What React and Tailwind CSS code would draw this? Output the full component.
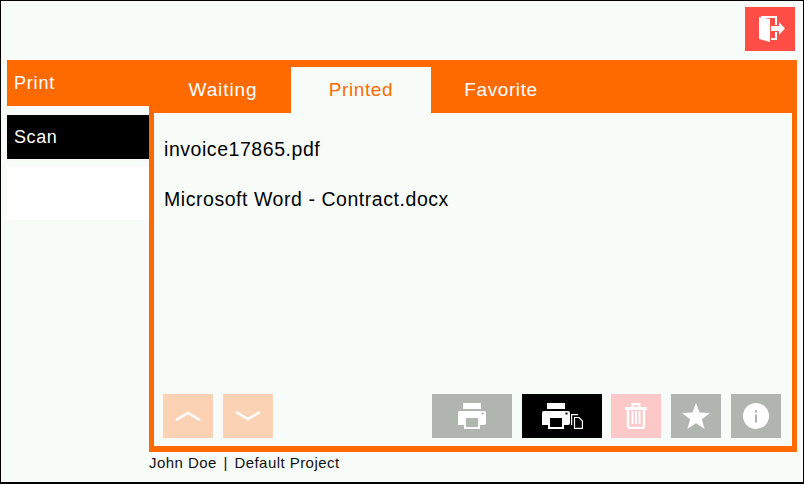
import React from 'react';

const PrinterIcon = ({ bg }) => (
    <svg width="30" height="28" viewBox="0 0 30 28">
        <rect x="6" y="1" width="18" height="6" fill="#fff" />
        <path d="M3 9h24a2 2 0 0 1 2 2v10a2 2 0 0 1-2 2H1V11a2 2 0 0 1 2-2z" fill="#fff" />
        <rect x="8" y="15" width="14" height="11" fill={bg} stroke="#fff" strokeWidth="2" />
        <rect x="24.500" y="10.500" width="2" height="2" fill={bg} />
    </svg>
);

const CopiesIcon = () => (
    <svg width="12" height="15" viewBox="0 0 12 15" fill="none" stroke="#fff" strokeWidth="1.200">
        <path d="M7 .6H.6V11" />
        <path d="M3.500 3.500h4.500l3.400 3.500v7.400H3.500z" />
    </svg>
);

const ExitIcon = () => (
    <svg width="26" height="26" viewBox="0 0 26 26" fill="#fff">
        <path d="M0 1l11 2v23L0 23z" />
        <path d="M2 0h16v9h-2V2H2zM16 16h2v8h-6v-2h4z" />
        <path d="M12 10h8V6l6 6.500-6 6.500v-4h-8z" />
    </svg>
);

const TrashIcon = () => (
    <svg width="22" height="26" viewBox="0 0 22 26" fill="none" stroke="#fff">
        <path d="M0 5.500h22" strokeWidth="3" />
        <path d="M7.500 4V1.200h7V4" strokeWidth="2.200" />
        <path d="M3 7v16a2 2 0 0 0 2 2h12a2 2 0 0 0 2-2V7" strokeWidth="2.400" />
        <path d="M7.500 8v13M11 8v13M14.500 8v13" strokeWidth="2" />
    </svg>
);

const StarIcon = () => (
    <svg width="28" height="26" viewBox="0 0 28 26" fill="#fff">
        <path d="M14 0l3.600 9.600L28 10l-8.200 6.300L22.700 26 14 20.300 5.300 26l2.900-9.700L0 10l10.400-.4z" />
    </svg>
);

const InfoIcon = () => (
    <svg width="26" height="26" viewBox="0 0 26 26">
        <circle cx="13" cy="13" r="13" fill="#fff" />
        <rect x="12" y="7" width="2" height="2.500" fill="#b0b5b0" />
        <rect x="12" y="11.500" width="2" height="8" fill="#b0b5b0" />
    </svg>
);

const Chevron = ({ d }) => (
    <svg width="26" height="10" viewBox="0 0 26 10" fill="none" stroke="#fff" strokeWidth="2.500">
        <path d={d} />
    </svg>
);

const ToolButton = ({ className, children }) => (
    <button className={`flex h-11 items-center justify-center ${className}`}>{children}</button>
);

const App = () => {
    return (
        <div className="flex h-[484px] w-[804px] flex-col border-t border-r border-b-2 border-l border-black bg-[#f8fcf9] font-['Liberation_Sans',sans-serif]">
            {/* Top bar */}
            <div className="flex h-[59px] justify-end pt-1.5 pr-2">
                <button className="flex h-11 w-[50px] items-center justify-center bg-[#ff4e45] pl-1">
                    <ExitIcon />
                </button>
            </div>

            <div className="flex pl-1.5">
                {/* Sidebar */}
                <div className="w-[142px]">
                    <div className="flex h-[46px] items-center bg-[#ff6a00] pl-[7px] text-[18px] tracking-[0.8px] text-white">Print</div>
                    <div className="mt-[9px] flex h-11 items-center bg-black pl-[7px] text-[18px] tracking-[0.6px] text-white">Scan</div>
                    <div className="mt-[7px] h-[54px] bg-white"></div>
                </div>

                {/* Main panel */}
                <div className="flex w-[648px] flex-col">
                    <div className="flex h-[53px] items-end bg-[#ff6a00] pl-1.5 text-[19px] tracking-[0.6px] text-white">
                        <div className="flex h-[46px] w-[136px] items-center justify-center tracking-[0.9px]">Waiting</div>
                        <div className="flex h-[46px] w-[140px] items-center justify-center bg-[#f8fcf9] text-[#ff6a00]">Printed</div>
                        <div className="flex h-[46px] w-[140px] items-center justify-center">Favorite</div>
                    </div>
                    <div className="flex h-[339px] flex-col justify-between border-x-[5px] border-b-[6px] border-[#ff6a00] pr-[11px] pb-2 pl-[9px]">
                        <div className="pt-6 pl-px text-[19.500px] leading-[24px] tracking-[0.55px] text-black">
                            <div>invoice17865.pdf</div>
                            <div className="mt-[26px]">Microsoft Word - Contract.docx</div>
                        </div>
                        <div className="flex items-center">
                            <ToolButton className="w-[50px] bg-[#fbd2b4]"><Chevron d="M1 9l12-7 12 7" /></ToolButton>
                            <ToolButton className="ml-2.5 w-[50px] bg-[#fbd2b4]"><Chevron d="M1 1l12 7 12-7" /></ToolButton>
                            <ToolButton className="ml-auto w-20 bg-[#b0b5b0]"><PrinterIcon bg="#b0b5b0" /></ToolButton>
                            <ToolButton className="ml-2.5 w-20 bg-black"><PrinterIcon bg="#000" /><span className="mt-[11px]"><CopiesIcon /></span></ToolButton>
                            <ToolButton className="ml-[9px] w-[50px] bg-[#fcc8c8]"><TrashIcon /></ToolButton>
                            <ToolButton className="ml-2.5 w-[50px] bg-[#b0b5b0]"><StarIcon /></ToolButton>
                            <ToolButton className="ml-2.5 w-[50px] bg-[#b0b5b0]"><InfoIcon /></ToolButton>
                        </div>
                    </div>
                    <div className="mt-[2px] text-[15px] leading-[18px] tracking-[0.45px] text-[#111]">John Doe<span className="mx-[2px]"> | </span>Default Project</div>
                </div>
            </div>
        </div>
    );
};

export default App;
